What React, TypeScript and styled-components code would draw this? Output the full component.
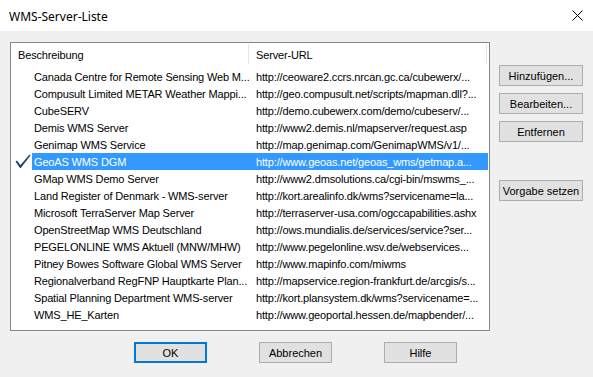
import { FC } from 'react';
import styled, { createGlobalStyle } from 'styled-components';

type Server = {
	name: string;
	url: string;
	selected?: boolean;
};

const servers: Server[] = [
	{ name: 'Canada Centre for Remote Sensing Web M...', url: 'http://ceoware2.ccrs.nrcan.gc.ca/cubewerx/...' },
	{ name: 'Compusult Limited METAR Weather Mappi...', url: 'http://geo.compusult.net/scripts/mapman.dll?...' },
	{ name: 'CubeSERV', url: 'http://demo.cubewerx.com/demo/cubeserv/...' },
	{ name: 'Demis WMS Server', url: 'http://www2.demis.nl/mapserver/request.asp' },
	{ name: 'Genimap WMS Service', url: 'http://map.genimap.com/GenimapWMS/v1/...' },
	{ name: 'GeoAS WMS DGM', url: 'http://www.geoas.net/geoas_wms/getmap.a...', selected: true },
	{ name: 'GMap WMS Demo Server', url: 'http://www2.dmsolutions.ca/cgi-bin/mswms_...' },
	{ name: 'Land Register of Denmark - WMS-server', url: 'http://kort.arealinfo.dk/wms?servicename=la...' },
	{ name: 'Microsoft TerraServer Map Server', url: 'http://terraserver-usa.com/ogccapabilities.ashx' },
	{ name: 'OpenStreetMap WMS Deutschland', url: 'http://ows.mundialis.de/services/service?ser...' },
	{ name: 'PEGELONLINE WMS Aktuell (MNW/MHW)', url: 'http://www.pegelonline.wsv.de/webservices...' },
	{ name: 'Pitney Bowes Software Global WMS Server', url: 'http://www.mapinfo.com/miwms' },
	{ name: 'Regionalverband RegFNP Hauptkarte Plan...', url: 'http://mapservice.region-frankfurt.de/arcgis/s...' },
	{ name: 'Spatial Planning Department WMS-server', url: 'http://kort.plansystem.dk/wms?servicename=...' },
	{ name: 'WMS_HE_Karten', url: 'http://www.geoportal.hessen.de/mapbender/...' },
];

const GlobalStyle = createGlobalStyle`
	html, body {
		margin: 0;
		padding: 0;
		background: #f0f0f0;
	}
	body {
		font-family: 'Liberation Sans', Arial, sans-serif;
		font-size: 11px;
		color: #000;
	}
`;

const CheckMark: FC = () => (
	<svg width="16" height="15" viewBox="0 0 16 15">
		<path d="M0.5 7.5 L2 6.5 L5.5 11 L14.5 0.5 L15.5 1.5 L5.8 14 L5 14 Z" fill="#1d4370" />
	</svg>
);

const CloseIcon: FC = () => (
	<svg width="11" height="11" viewBox="0 0 11 11">
		<path d="M0.5 0.5 L10.5 10.5 M10.5 0.5 L0.5 10.5" stroke="#000" strokeWidth="1" />
	</svg>
);

const App: FC = () => (
	<>
		<GlobalStyle />
		<Window>
			<TitleBar>
				<Title>WMS-Server-Liste</Title>
				<CloseButton>
					<CloseIcon />
				</CloseButton>
			</TitleBar>
			<Body>
				<ListBox>
					<ListHeader>
						<HeaderCell>Beschreibung</HeaderCell>
						<HeaderCell>Server-URL</HeaderCell>
					</ListHeader>
					<Rows>
						{servers.map(({ name, url, selected }) => (
							<Row key={name}>
								<CheckCell>{selected && <CheckMark />}</CheckCell>
								<NameCell selected={!!selected}>{name}</NameCell>
								<UrlCell selected={!!selected}>{url}</UrlCell>
							</Row>
						))}
					</Rows>
				</ListBox>
				<SideButtons>
					<Button>Hinzufügen...</Button>
					<Button>Bearbeiten...</Button>
					<Button>Entfernen</Button>
					<DefaultButton>Vorgabe setzen</DefaultButton>
				</SideButtons>
			</Body>
			<Footer>
				<FooterButton primary>OK</FooterButton>
				<FooterButton>Abbrechen</FooterButton>
				<FooterButton>Hilfe</FooterButton>
			</Footer>
		</Window>
	</>
);

const Window = styled.div`
	width: 593px;
	height: 377px;
	background: #f0f0f0;
	display: flex;
	flex-direction: column;
	overflow: hidden;
`;

const TitleBar = styled.div`
	height: 31px;
	background: #fff;
	display: flex;
	align-items: center;
	justify-content: space-between;
	padding: 0 10px 0 9px;
	box-sizing: border-box;
`;

const Title = styled.div`
	font-family: 'Noto Sans', 'Liberation Sans', sans-serif;
	font-size: 12px;
	color: #000;
	margin-top: 1px;
`;

const CloseButton = styled.div`
	width: 11px;
	height: 11px;
	display: flex;
`;

const Body = styled.div`
	display: grid;
	grid-template-columns: 480px 84px;
	column-gap: 9px;
	padding: 11px 10px 0 10px;
`;

const ListBox = styled.div`
	height: 289px;
	box-sizing: border-box;
	border: 1px solid #828790;
	background: #fff;
	overflow: hidden;
	letter-spacing: -0.15px;
`;

const ListHeader = styled.div`
	display: grid;
	grid-template-columns: 238px 238px;
	height: 22px;
`;

const HeaderCell = styled.div`
	display: flex;
	align-items: center;
	padding: 2px 0 0 7px;
	border-right: 1px solid #e5e5e5;
	margin: 1px 0;
`;

const Rows = styled.div`
	padding-top: 3px;
`;

const Row = styled.div`
	display: grid;
	grid-template-columns: 21px 217px 239px;
	height: 17px;
	align-items: center;
	white-space: nowrap;
`;

const CheckCell = styled.div`
	height: 17px;
	display: flex;
	align-items: center;
	justify-content: flex-end;
	padding-right: 1px;
`;

const NameCell = styled.div<{ selected: boolean }>`
	height: 17px;
	line-height: 18px;
	padding-left: 2px;
	overflow: hidden;
	background: ${(props) => (props.selected ? '#3399ff' : 'transparent')};
	color: ${(props) => (props.selected ? '#fff' : '#000')};
`;

const UrlCell = styled.div<{ selected: boolean }>`
	height: 17px;
	line-height: 18px;
	padding-left: 7px;
	overflow: hidden;
	background: ${(props) => (props.selected ? '#3399ff' : 'transparent')};
	color: ${(props) => (props.selected ? '#fff' : '#000')};
`;

const SideButtons = styled.div`
	display: flex;
	flex-direction: column;
	gap: 7px;
	padding-top: 23px;
`;

const Button = styled.div`
	height: 21px;
	box-sizing: border-box;
	border: 1px solid #adadad;
	background: #e1e1e1;
	display: flex;
	align-items: center;
	justify-content: center;
	font-size: 11px;
`;

const DefaultButton = styled(Button)`
	margin-top: 31px;
`;

const Footer = styled.div`
	display: flex;
	gap: 52px;
	padding: 11px 0 0 134px;
`;

const FooterButton = styled(Button)<{ primary?: boolean }>`
	width: 73px;
	border: ${(props) => (props.primary ? '2px solid #0078d7' : '1px solid #adadad')};
`;

export default App;
